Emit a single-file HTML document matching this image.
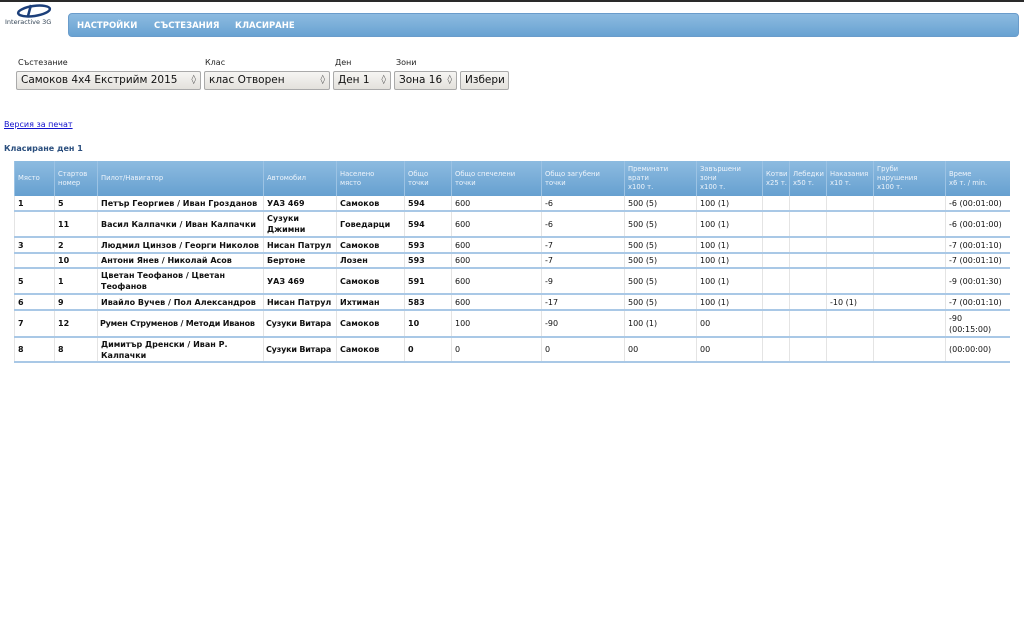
<!DOCTYPE html>
<html><head><meta charset="utf-8"><style>
*{margin:0;padding:0;box-sizing:border-box}
body{width:1024px;height:640px;background:#fff;font-family:"DejaVu Sans","Liberation Sans",sans-serif;position:relative;overflow:hidden}
.top{position:absolute;left:0;top:0;width:1024px;height:2px;background:#2a2a2a}
.nav{position:absolute;left:68px;top:13px;width:951px;height:24px;border-radius:4px;background:linear-gradient(#8dbbe0,#68a2d2);border:1px solid #6a9ccb}
.nav span{position:absolute;top:7px;color:#fff;font-weight:bold;font-size:8.5px}
.logo{position:absolute;left:5px;top:18px;font-size:6.5px;color:#345}
.lbl{position:absolute;top:58px;font-size:8px;color:#222}
.sel{position:absolute;top:71px;height:19px;border:1px solid #aaa;border-radius:2px;background:linear-gradient(#f6f5f3,#e3e1dc);font-size:10.5px;color:#111;padding:2px 0 0 4px;white-space:nowrap}
.sel i{position:absolute;right:4px;top:3px;font-style:normal;font-size:9px;color:#555}
a.pr{position:absolute;left:4px;top:120px;font-size:8px;color:#11c;text-decoration:underline}
.h{position:absolute;left:4px;top:144px;font-size:8px;font-weight:bold;color:#2b4f7e}
table{position:absolute;left:14px;top:161px;width:995px;border-collapse:collapse;table-layout:fixed}
th{background:linear-gradient(#8dbbe0,#66a0d0);color:#eef4fb;font-size:6.8px;font-weight:normal;text-align:left;padding:1px 3px;height:35px;border-left:1px solid #9cc3e4;line-height:9px;vertical-align:middle;white-space:nowrap}
td{font-size:8px;color:#111;padding:0 3px;border-bottom:2px solid #a9c8e6;border-left:1px solid #e4e4e4;line-height:11px}
td.b{font-weight:bold}
td.n{white-space:nowrap;letter-spacing:-0.2px;padding:0 2px}
</style></head><body>
<div class="top"></div>
<svg style="position:absolute;left:14px;top:2px" width="40" height="16" viewBox="0 0 40 16"><ellipse cx="20" cy="9" rx="16" ry="5" fill="none" stroke="#1c3f7a" stroke-width="2.5" transform="rotate(-8 20 9)"/><path d="M17 3 L14 14" stroke="#1c3f7a" stroke-width="2.5"/></svg>
<div class="logo">Interactive 3G</div>
<div class="nav"><span style="left:8px">НАСТРОЙКИ</span><span style="left:85px">СЪСТЕЗАНИЯ</span><span style="left:166px">КЛАСИРАНЕ</span></div>
<div class="lbl" style="left:18px">Състезание</div>
<div class="lbl" style="left:205px">Клас</div>
<div class="lbl" style="left:335px">Ден</div>
<div class="lbl" style="left:396px">Зони</div>
<div class="sel" style="left:16px;width:185px">Самоков 4x4 Екстрийм 2015<i>◊</i></div>
<div class="sel" style="left:204px;width:126px">клас Отворен<i>◊</i></div>
<div class="sel" style="left:333px;width:58px">Ден 1<i>◊</i></div>
<div class="sel" style="left:394px;width:63px">Зона 16<i>◊</i></div>
<div class="sel" style="left:460px;width:49px">Избери</div>
<a class="pr">Версия за печат</a>
<div class="h">Класиране ден 1</div>
<table>
<colgroup><col style="width:40px"><col style="width:43px"><col style="width:166px"><col style="width:73px"><col style="width:68px"><col style="width:47px"><col style="width:90px"><col style="width:83px"><col style="width:72px"><col style="width:66px"><col style="width:27px"><col style="width:37px"><col style="width:47px"><col style="width:72px"><col style="width:64px"></colgroup>
<tr><th>Място</th><th>Стартов<br>номер</th><th>Пилот/Навигатор</th><th>Автомобил</th><th>Населено<br>място</th><th>Общо<br>точки</th><th>Общо спечелени<br>точки</th><th>Общо загубени<br>точки</th><th>Преминати<br>врати<br>x100 т.</th><th>Завършени<br>зони<br>x100 т.</th><th>Котви<br>x25 т.</th><th>Лебедки<br>x50 т.</th><th>Наказания<br>x10 т.</th><th>Груби<br>нарушения<br>x100 т.</th><th>Време<br>x6 т. / min.</th></tr>
<tr style="height:15px"><td class="b">1</td><td class="b">5</td><td class="b">Петър Георгиев / Иван Грозданов</td><td class="b">УАЗ 469</td><td class="b">Самоков</td><td class="b">594</td><td>600</td><td>-6</td><td>500 (5)</td><td>100 (1)</td><td></td><td></td><td></td><td></td><td>-6 (00:01:00)</td></tr>
<tr style="height:26px"><td class="b"></td><td class="b">11</td><td class="b">Васил Калпачки / Иван Калпачки</td><td class="b">Сузуки Джимни</td><td class="b">Говедарци</td><td class="b">594</td><td>600</td><td>-6</td><td>500 (5)</td><td>100 (1)</td><td></td><td></td><td></td><td></td><td>-6 (00:01:00)</td></tr>
<tr style="height:16px"><td class="b">3</td><td class="b">2</td><td class="b">Людмил Цинзов / Георги Николов</td><td class="b">Нисан Патрул</td><td class="b">Самоков</td><td class="b">593</td><td>600</td><td>-7</td><td>500 (5)</td><td>100 (1)</td><td></td><td></td><td></td><td></td><td>-7 (00:01:10)</td></tr>
<tr style="height:15px"><td class="b"></td><td class="b">10</td><td class="b">Антони Янев / Николай Асов</td><td class="b">Бертоне</td><td class="b">Лозен</td><td class="b">593</td><td>600</td><td>-7</td><td>500 (5)</td><td>100 (1)</td><td></td><td></td><td></td><td></td><td>-7 (00:01:10)</td></tr>
<tr style="height:26px"><td class="b">5</td><td class="b">1</td><td class="b">Цветан Теофанов / Цветан Теофанов</td><td class="b">УАЗ 469</td><td class="b">Самоков</td><td class="b">591</td><td>600</td><td>-9</td><td>500 (5)</td><td>100 (1)</td><td></td><td></td><td></td><td></td><td>-9 (00:01:30)</td></tr>
<tr style="height:16px"><td class="b">6</td><td class="b">9</td><td class="b">Ивайло Вучев / Пол Александров</td><td class="b">Нисан Патрул</td><td class="b">Ихтиман</td><td class="b">583</td><td>600</td><td>-17</td><td>500 (5)</td><td>100 (1)</td><td></td><td></td><td>-10 (1)</td><td></td><td>-7 (00:01:10)</td></tr>
<tr style="height:27px"><td class="b">7</td><td class="b">12</td><td class="b n">Румен Струменов / Методи Иванов</td><td class="b n">Сузуки Витара</td><td class="b">Самоков</td><td class="b">10</td><td>100</td><td>-90</td><td>100 (1)</td><td>00</td><td></td><td></td><td></td><td></td><td>-90<br>(00:15:00)</td></tr>
<tr style="height:25px"><td class="b">8</td><td class="b">8</td><td class="b">Димитър Дренски / Иван Р. Калпачки</td><td class="b n">Сузуки Витара</td><td class="b">Самоков</td><td class="b">0</td><td>0</td><td>0</td><td>00</td><td>00</td><td></td><td></td><td></td><td></td><td>(00:00:00)</td></tr>
</table>
</body></html>
